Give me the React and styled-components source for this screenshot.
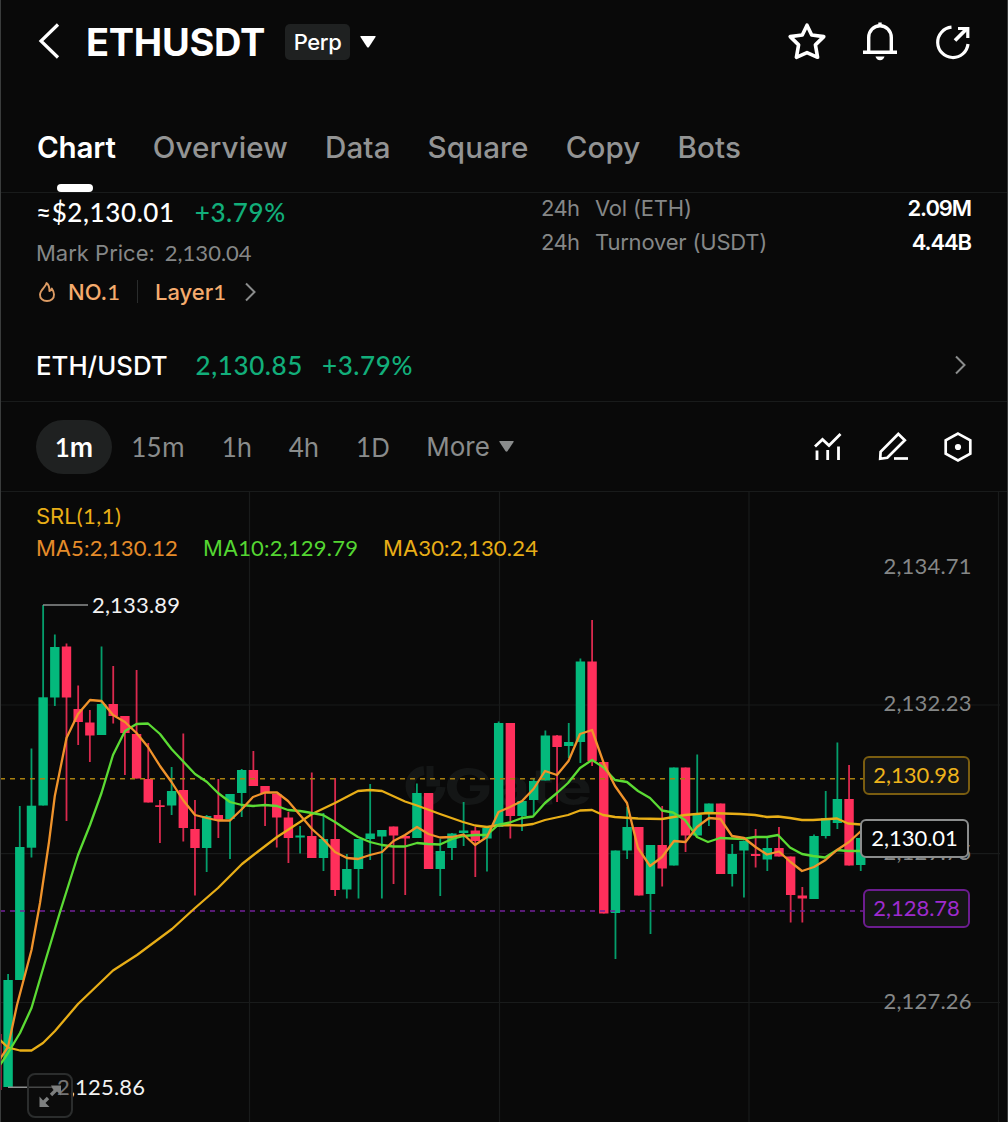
import React from "react";
import styled, { createGlobalStyle } from "styled-components";

const GlobalStyle = createGlobalStyle`
  body {
    margin: 0;
    background-color: #090909;
  }
`;

const Screen = styled.div`
  display: flex;
  flex-direction: column;
  width: 1008px;
  height: 1122px;
  box-sizing: border-box;
  border-left: 1px solid #3a3c3c;
  border-right: 1px solid #3a3c3c;
  background-color: #090909;
  color: #fff;
  font-family: Inter, "Liberation Sans", sans-serif;
  overflow: hidden;
`;

// prices are set in a face with even figure widths
const Num = styled.span`
  font-family: ${({ $medium }) => ($medium ? '"Lato Medium", ' : "")}Lato, Inter, sans-serif;
  font-size: ${({ $size }) => ($size ? `${$size}px` : "inherit")};
  letter-spacing: ${({ $spacing }) => $spacing || 0}px;
  padding-bottom: ${({ $lift }) => $lift || 0}px;
`;

const Header = styled.header`
  display: flex;
  align-items: center;
  height: 84px;
  padding: 0 34px 0 36px;
`;

const Pair = styled.h1`
  margin: 0 20px 0 25px;
  font-size: 38px;
  font-weight: 700;
  letter-spacing: -0.3px;
`;

const Tag = styled.span`
  display: flex;
  align-items: center;
  justify-content: center;
  width: 65px;
  height: 36px;
  margin-right: 10px;
  border-radius: 5px;
  background-color: #1f2121;
  font-size: 22px;
  font-weight: 500;
  letter-spacing: -0.4px;
`;

const HeaderActions = styled.div`
  display: flex;
  align-items: center;
  gap: 33px;
  margin-left: auto;
  margin-top: -2px;
`;

const Tabs = styled.nav`
  display: flex;
  gap: 37px;
  height: 108px;
  padding: 0 36px;
  border-bottom: 1px solid #191b1b;
`;

const Tab = styled.div`
  display: flex;
  flex-direction: column;
  align-items: center;
  justify-content: space-between;
  padding-top: 44px;
  box-sizing: border-box;
  font-size: 29.6px;
  line-height: 38px;
  letter-spacing: ${({ $active }) => ($active ? -0.2 : 0.12)}px;
  font-weight: ${({ $active }) => ($active ? 600 : 500)};
  color: ${({ $active }) => ($active ? "#fff" : "#939494")};
`;

const TabMarker = styled.span`
  width: 36px;
  height: 8px;
  margin-right: 3px;
  border-radius: 4px;
  background-color: #fff;
`;

const Stats = styled.section`
  display: flex;
  justify-content: space-between;
  height: 137px;
  padding: 0 36px 0 35px;
`;

const PriceColumn = styled.div`
  display: flex;
  flex-direction: column;
`;

const PriceLine = styled.div`
  display: flex;
  align-items: center;
  gap: 20px;
  height: 39px;
  font-size: 26px;
  font-weight: 500;
`;

const Up = styled.span`
  display: flex;
  color: #12ae7a;
`;

const MarkPrice = styled.div`
  display: flex;
  align-items: center;
  gap: 10px;
  height: 42px;
  font-size: 22px;
  color: #858787;
`;

const Ranking = styled.div`
  display: flex;
  align-items: center;
  height: 35px;
  font-size: 22px;
  font-weight: 500;
  color: #f5ab6d;
`;

const RankingText = styled.span`
  margin-left: ${({ $left }) => $left}px;
  margin-right: ${({ $right }) => $right}px;
  line-height: 26px;
`;

const RankingDivider = styled.span`
  width: 1px;
  height: 23px;
  background-color: #2a2c2c;
`;

const VolumeColumn = styled.div`
  width: 430px;
  margin-top: -2px;
`;

const VolumeRow = styled.div`
  display: flex;
  align-items: center;
  height: 34px;
  font-size: 22px;
  letter-spacing: -0.2px;
  color: #858787;
`;

const Period = styled.span`
  width: 54px;
  letter-spacing: -0.6px;
`;

const VolumeValue = styled.span`
  margin-left: auto;
  color: #fff;
  font-weight: 600;
  letter-spacing: -1.1px;
`;

const SpotRow = styled.section`
  display: flex;
  align-items: center;
  height: 71px;
  padding: 0 40px 0 35px;
  border-bottom: 1px solid #191b1b;
  font-size: 25.8px;
  font-weight: 500;
`;

const SpotText = styled.span`
  display: flex;
  margin-right: ${({ $gap }) => $gap}px;
  color: ${({ $up }) => ($up ? "#12ae7a" : "#fff")};
`;

const Push = styled.span`
  display: flex;
  margin-left: auto;
  margin-bottom: 2px;
`;

const Toolbar = styled.section`
  display: flex;
  align-items: center;
  height: 89px;
  padding: 0 34px 0 35px;
  border-bottom: 1px solid #191b1b;
`;

const Interval = styled.span`
  display: flex;
  align-items: baseline;
  justify-content: center;
  width: ${({ $width }) => $width}px;
  height: 54px;
  line-height: 54px;
  margin-right: ${({ $gap }) => $gap}px;
  border-radius: 27px;
  background-color: ${({ $active }) => ($active ? "#1f2121" : "transparent")};
  color: ${({ $active }) => ($active ? "#fff" : "#8a8c8c")};
  font-size: 26px;
  font-weight: ${({ $active }) => ($active ? 600 : 400)};
`;

const ToolIcons = styled.div`
  display: flex;
  align-items: center;
  gap: 34px;
  margin-left: auto;
`;

const ChartArea = styled.section`
  position: relative;
  height: 630px;
  margin-left: -1px;
  width: 1007px;
`;

const Indicators = styled.div`
  position: absolute;
  top: 8px;
  left: 36px;
  display: flex;
  flex-direction: column;
  font-size: 22px;
  line-height: 31px;
`;

const IndicatorRow = styled.div`
  display: flex;
  gap: 25px;
`;

const IndicatorText = styled.span`
  color: ${({ $color }) => $color};
`;

const PriceBadge = styled.div`
  position: absolute;
  top: ${({ $top }) => $top}px;
  left: ${({ $left }) => $left}px;
  display: flex;
  align-items: center;
  justify-content: center;
  width: ${({ $width }) => $width}px;
  height: 39px;
  box-sizing: border-box;
  border: 2px solid ${({ $border }) => $border};
  border-radius: 6px;
  background-color: ${({ $bg }) => $bg};
  color: ${({ $color }) => $color};
  font-size: 22px;
`;

const ExpandButton = styled.div`
  position: absolute;
  left: 27px;
  top: 581px;
  width: 46px;
  height: 45px;
  box-sizing: border-box;
  border: 2px solid #2b2d2d;
  border-radius: 8px;
  background-color: rgba(12, 13, 13, 0.55);
`;

const CHART_TOP = 492;
const STEP = 11.68;
const UP = "#04b97c";
const DOWN = "#ff2f5b";

// [direction, high, body top, body bottom, low]
const candles = [
  ["u", 974, 980, 1087, 1087],
  ["u", 806, 847, 980, 980],
  ["u", 748.5, 805.7, 847.7, 857.5],
  ["u", 605, 697.3, 805.5, 805.5],
  ["u", 634.5, 647, 697.5, 706],
  ["d", 643.5, 646.5, 697.5, 821],
  ["d", 685.5, 709, 722, 745],
  ["d", 710, 722.5, 735.5, 762],
  ["u", 646.5, 704, 735, 735],
  ["d", 666, 704, 716, 723.5],
  ["d", 716, 716, 733, 775],
  ["d", 670, 734, 778.5, 778.5],
  ["d", 743, 779, 802.5, 802.5],
  ["d", 800, 805.3, 807, 843],
  ["u", 767, 791, 805.5, 815],
  ["d", 733.5, 790, 828, 841.5],
  ["d", 800, 829, 848, 895.5],
  ["u", 815, 816, 848, 872],
  ["d", 779, 815, 820, 838],
  ["u", 794, 794, 819, 859],
  ["u", 769, 770, 793, 817],
  ["d", 751, 770, 786, 786],
  ["d", 786, 786, 793, 826],
  ["d", 794, 794, 817.5, 847.5],
  ["d", 812, 817.5, 838, 863],
  ["u", 826, 835.5, 837.5, 853.5],
  ["d", 772.5, 836, 858, 858],
  ["u", 813, 839, 858, 871],
  ["d", 778, 839, 890, 896],
  ["u", 854, 869, 889.5, 898.5],
  ["u", 839, 839, 869, 898.5],
  ["u", 784, 833.5, 839, 860],
  ["u", 830, 830, 836.5, 898.5],
  ["d", 826.5, 826.5, 835.5, 884],
  ["d", 835, 836, 838.5, 895],
  ["u", 783.5, 793, 838, 838],
  ["d", 793, 793, 869, 869],
  ["u", 839, 851, 869, 896],
  ["u", 833, 833.5, 848, 860],
  ["u", 802, 830.5, 833, 846],
  ["d", 827, 830.5, 841, 877],
  ["u", 828, 828, 838.5, 871.5],
  ["u", 721.5, 723, 827, 827],
  ["d", 723, 723, 816, 838.5],
  ["u", 801, 801, 816, 831],
  ["u", 779, 781, 800, 815],
  ["u", 730.5, 735.5, 780.5, 780.5],
  ["d", 735, 735.5, 747, 802],
  ["u", 723, 742, 746, 758],
  ["u", 658.5, 661.5, 742, 763],
  ["d", 620, 661.5, 761, 766],
  ["d", 762, 762, 913.5, 913.5],
  ["u", 850.5, 850.5, 913, 959],
  ["u", 807, 827, 850.5, 859],
  ["d", 827, 827, 895.5, 895.5],
  ["u", 845, 845, 894, 934],
  ["d", 806, 845, 868.5, 886.5],
  ["u", 767.5, 767.5, 865.5, 865.5],
  ["d", 767.5, 767.5, 835.5, 852],
  ["u", 754.5, 815, 835.5, 835.5],
  ["u", 803.5, 803.5, 813, 826],
  ["d", 803.5, 803.5, 874, 874],
  ["u", 844, 854, 874, 886.5],
  ["u", 840.5, 841, 850.5, 897.5],
  ["d", 829, 854, 856, 867.5],
  ["u", 838, 848, 859.5, 871],
  ["d", 827, 848, 856.5, 856.5],
  ["d", 856.5, 856.5, 895, 922.5],
  ["d", 887, 895.5, 898.5, 922.5],
  ["u", 834.5, 836, 899, 899],
  ["u", 791, 818, 836, 838.5],
  ["u", 742.5, 799, 823, 829],
  ["d", 765, 799, 865.5, 865.5],
  ["u", 837, 838, 865, 871],
];

const ma5 =
  "0,1059 8,1047 17,1005 31.5,950 40,903 49,842 54.8,796 66.5,738 78,714 90,700 101.5,701 113,715 125,722 136.5,733 148,747 160,766 171.5,782 183,800 195,815 207,818 218,820.5 230,820.5 242,809 253,797 265,792.5 277,792.5 288,801 300,815 312,829 323,839 335,852 347,858 358,859 370,855 382,852 393.5,841 405,835 417,827 428.5,834 440,837.5 452,837 463.5,834.5 475,845 487,837 498.5,812 510,807 522,801 533.5,789 545,771 557,775 568.5,761 580,734 592,730 604,764 615,786 627,803 632,824 638,848 650,866 662,857 674,841 685.5,842 697,827 709,818 720.5,819 732,836 744,838 755.5,847 767,854.5 779,851.5 790.5,862 802,871 814,867 825.5,860 837,850 849,842 861,831";
const ma10 =
  "0,1065 8,1053 20,1033 31.5,1008 45,962 60,912 78,855 90,825 101.5,793 113,755 125,731 136.5,724 148,723.5 160,734 171.5,749 195,774 207,782 218,793 230,802 242,805 253,806 265,805 277,806 288,810 300,811 312,813 323,815 335,822 347,830 358,837 370,842 382,845 393,846.5 405,846.5 417,843 428,844 440,844.5 452,839 463.5,836 475,835 487,835 498,825 510,822.5 522,818 533,816.5 545,803 557,793 568,783 580,768 592,760 603,767 615,780 627,782 638,791 650,798 662,810.5 673,812.5 685,820 697,837 708,842 720,838 732,838.5 743,839 755,837 767,837 778,835 790,847.5 802,854 813,856 825,857.5 837,850 848,851 861,851";
const ma30 =
  "0,1040 8,1047.5 20,1050.5 31.5,1050.5 43,1043 55,1031 78,1004 113,970.5 137,955 172,929 195,908 218,888 242,864 258,851.5 277,837 300,822 312,814 335,803 358,791 370,790 382,791 405,801.5 417,805.5 440,814 463,822 475,825.5 487,827 500,825 522,825.5 533,824 545,820 568,815 580,810.5 592,810 603,815 615,817 638,818.5 662,819 685,815 708,813 740,814 755,815 767,817 778,816.5 790,818 802,820 813,820 837,818.5 848,823.5 861,824.5";

const BackIcon = () => (
  <svg width="24" height="40" viewBox="0 0 24 40" fill="none" stroke="#fff" strokeWidth="3.2">
    <path d="M21 2.5 L4 19 L21 35.5" />
  </svg>
);

const Caret = ({ size = 16, color = "#fff" }) => (
  <svg width={size} height={size * 0.75} viewBox="0 0 16 12" fill={color}>
    <path d="M0.8 0 H15.2 Q16 0 15.5 1 L9 11 Q8 12 7 11 L0.5 1 Q0 0 0.8 0 Z" />
  </svg>
);

const Chevron = ({ color }) => (
  <svg width="13" height="20" viewBox="0 0 13 20" fill="none" stroke={color} strokeWidth="2">
    <path d="M2 1.5 L10.5 10 L2 18.5" />
  </svg>
);

const StarIcon = () => (
  <svg width="40" height="40" viewBox="0 0 40 40" fill="none" stroke="#fff" strokeWidth="3.6" strokeLinejoin="round">
    <path d="M20 4.2 L24.7 14 L36.8 15.6 L28.4 23.9 L30.6 36.3 L20 31.6 L9.4 36.3 L11.6 23.9 L3.2 15.6 L15.3 14 Z" />
  </svg>
);

const BellIcon = () => (
  <svg width="40" height="40" viewBox="0 0 40 40" fill="none" stroke="#fff" strokeWidth="3.4">
    <path d="M8.7 31 V16.5 A11.3 11.8 0 0 1 31.3 16.5 V31" />
    <path d="M3 31.2 H37" />
    <path d="M20 1.5 V6" />
    <path d="M15.5 35.5 H24.5 Q23.5 39.2 20 39.2 Q16.5 39.2 15.5 35.5 Z" fill="#fff" stroke="none" />
  </svg>
);

const ShareIcon = () => (
  <svg width="40" height="40" viewBox="0 0 40 40" fill="none" stroke="#fff" strokeWidth="3.2">
    <path d="M18.5 6.2 A15.2 15.2 0 1 0 35 23" />
    <path d="M22 19.5 L34 7.5" strokeWidth="3.8" />
    <path d="M25 7.5 H34.8 V17" />
  </svg>
);

const FlameIcon = () => (
  <svg width="20" height="24" viewBox="0 0 20 24" fill="none" stroke="#dc9b64" strokeWidth="1.9" strokeLinejoin="round">
    <path d="M10.5 3 C10.5 6.5 4.5 9 4 14.5 C3.8 18.5 7 21 11 21 C15 21 18.2 18.5 18 14.5 C17.9 12 16.8 10 15.8 8.5 C15.4 10 14.6 10.8 13.4 11 C13.6 7.5 12.8 4.8 10.5 3 Z" />
  </svg>
);

const TrendIcon = () => (
  <svg width="30" height="32" viewBox="0 0 30 32" fill="none" stroke="#fff" strokeWidth="2.8">
    <path d="M2 15.5 L9.5 8.5 L16 14.5 L27.5 3" />
    <path d="M4 19.5 V29 M14.7 19 V29 M25.5 15.5 V29" />
  </svg>
);

const PencilIcon = () => (
  <svg width="32" height="32" viewBox="0 0 32 32" fill="none" stroke="#fff" strokeWidth="2.7">
    <path d="M3.2 27.8 L3.6 20.8 L21.3 3 L27.8 9.2 L10.3 26.8 Z" />
    <path d="M17 27.5 H31" />
  </svg>
);

const HexIcon = () => (
  <svg width="30" height="32" viewBox="0 0 30 32" fill="none" stroke="#fff" strokeWidth="2.7">
    <path d="M15 2.6 L27.3 9.2 V22.8 L15 29.4 L2.7 22.8 V9.2 Z" />
    <circle cx="15" cy="16" r="3.1" fill="#fff" stroke="none" />
  </svg>
);

const ExpandIcon = () => (
  <svg width="42" height="41" viewBox="0 0 42 41" fill="none" stroke="#7d7f7f" strokeWidth="3.4">
    <path d="M22 20 L28 14" />
    <path d="M22 10.5 H32 V20.5 L28 16.5 L24 14.5 Z" fill="#7d7f7f" stroke="none" />
    <path d="M19 23 L13 29" />
    <path d="M10.5 21.5 V32 H20.5 L16.5 28 L14.5 26 Z" fill="#7d7f7f" stroke="none" />
  </svg>
);

const axisLabels = [
  { y: 565.5, text: "2,134.71" },
  { y: 702.5, text: "2,132.23" },
  { y: 851.5, text: "2,129.75" },
  { y: 1001, text: "2,127.26" },
];

const Chart = () => (
  <svg
    width="1007"
    height="630"
    viewBox={`0 ${CHART_TOP} 1007 630`}
    fontFamily="Lato, Inter, sans-serif"
    fontSize="22"
  >
    <g stroke="#191b1b" strokeWidth="1.2">
      {[249.5, 499.5, 749, 998.5].map((x) => (
        <line key={x} x1={x} x2={x} y1={CHART_TOP} y2="1122" />
      ))}
      {[705, 853.7, 1002.5].map((y) => (
        <line key={y} x1="0" x2="1000" y1={y} y2={y} />
      ))}
    </g>

    <g fill="none" stroke="#141616" strokeWidth="9">
      <path d="M424 770.5 A15.5 15.5 0 1 0 441 787" />
      <path d="M430 766 V783 H440" strokeWidth="7" />
    </g>
    <text
      x="444"
      y="804.5"
      fontFamily="Inter, sans-serif"
      fontSize="51"
      fontWeight="700"
      fill="#141616"
      textLength="148"
      lengthAdjust="spacingAndGlyphs"
    >
      Gate
    </text>

    <g fill="#858787">
      {axisLabels.map(({ y, text }) => (
        <text key={text} x="883.5" y={y + 8} textLength="88">
          {text}
        </text>
      ))}
    </g>

    <rect x="0" y="1034" width="1.5" height="56" fill={DOWN} />
    {candles.map(([dir, high, top, bottom, low], i) => {
      const x = 8.1 + i * STEP;
      const color = dir === "u" ? UP : DOWN;
      return (
        <g key={i} fill={color}>
          <rect x={x - 0.9} y={high} width="1.8" height={low - high} opacity="0.85" />
          <rect x={x - 4.7} y={top} width="9.4" height={bottom - top} />
        </g>
      );
    })}

    <g fill="none" strokeWidth="1.5" strokeDasharray="5 5">
      <line x1="0" x2="863" y1="778.7" y2="778.7" stroke="#a9810f" />
      <line x1="0" x2="863" y1="911" y2="911" stroke="#74219a" />
    </g>

    <g fill="none" strokeWidth="2.3" strokeLinejoin="round">
      <polyline points={ma30} stroke="#e8ae17" />
      <polyline points={ma10} stroke="#5bdb34" />
      <polyline points={ma5} stroke="#f0932b" />
    </g>

    <g stroke="#8d8f8f" strokeWidth="1.6">
      <line x1="43" x2="88" y1="605" y2="605" />
      <line x1="8" x2="56" y1="1087.3" y2="1087.3" />
    </g>
    <g fill="#f2f2f2">
      <text x="92" y="613" textLength="88">
        2,133.89
      </text>
      <text x="57" y="1095" textLength="88">
        2,125.86
      </text>
    </g>
  </svg>
);

const App = () => {
  return (
    <Screen>
      <GlobalStyle />
      <Header>
        <BackIcon />
        <Pair>ETHUSDT</Pair>
        <Tag>Perp</Tag>
        <Caret />
        <HeaderActions>
          <StarIcon />
          <BellIcon />
          <ShareIcon />
        </HeaderActions>
      </Header>

      <Tabs>
        <Tab $active>
          Chart
          <TabMarker />
        </Tab>
        <Tab>Overview</Tab>
        <Tab>Data</Tab>
        <Tab>Square</Tab>
        <Tab>Copy</Tab>
        <Tab>Bots</Tab>
      </Tabs>

      <Stats>
        <PriceColumn>
          <PriceLine>
            <Num $medium $spacing={0.6} $lift={2}>≈$2,130.01</Num>
            <Up>
              <Num $medium $spacing={0.6} $lift={2}>+3.79%</Num>
            </Up>
          </PriceLine>
          <MarkPrice>
            <span>Mark Price:</span>
            <Num $lift={2}>2,130.04</Num>
          </MarkPrice>
          <Ranking>
            <FlameIcon />
            <RankingText $left={12} $right={18}>
              NO.<Num $medium $spacing={-1}>1</Num>
            </RankingText>
            <RankingDivider />
            <RankingText $left={17} $right={18}>
              Layer<Num $medium>1</Num>
            </RankingText>
            <Chevron color="#8a8c8c" />
          </Ranking>
        </PriceColumn>
        <VolumeColumn>
          <VolumeRow>
            <Period>24h</Period>
            <span>Vol (ETH)</span>
            <VolumeValue>2.09M</VolumeValue>
          </VolumeRow>
          <VolumeRow>
            <Period>24h</Period>
            <span>Turnover (USDT)</span>
            <VolumeValue>4.44B</VolumeValue>
          </VolumeRow>
        </VolumeColumn>
      </Stats>

      <SpotRow>
        <SpotText $gap={28}>ETH/USDT</SpotText>
        <SpotText $up $gap={19}>
          <Num $medium $size={26} $spacing={0.6} $lift={2}>2,130.85</Num>
        </SpotText>
        <SpotText $up $gap={0}>
          <Num $medium $size={26} $spacing={0.6} $lift={2}>+3.79%</Num>
        </SpotText>
        <Push>
          <Chevron color="#8a8c8c" />
        </Push>
      </SpotRow>

      <Toolbar>
        <Interval $active $width={76} $gap={19}>
          <Num>1</Num>m
        </Interval>
        <Interval $width={54} $gap={37}>
          <Num $spacing={0.4}>15</Num>m
        </Interval>
        <Interval $width={30} $gap={36}>
          <Num>1</Num>h
        </Interval>
        <Interval $width={32} $gap={36}>
          <Num>4</Num>h
        </Interval>
        <Interval $width={34} $gap={37}>
          <Num>1</Num>D
        </Interval>
        <Interval $width={62} $gap={10}>More</Interval>
        <Caret size={15} color="#8a8c8c" />
        <ToolIcons>
          <TrendIcon />
          <PencilIcon />
          <HexIcon />
        </ToolIcons>
      </Toolbar>

      <ChartArea>
        <Chart />
        <Indicators>
          <IndicatorText $color="#e8ae17">
            SRL<Num $spacing={0.5}>(1,1)</Num>
          </IndicatorText>
          <IndicatorRow>
            <IndicatorText $color="#e58c2a">
              MA<Num $spacing={0.2}>5:2,130.12</Num>
            </IndicatorText>
            <IndicatorText $color="#54d632">
              MA<Num $spacing={0.2}>10:2,129.79</Num>
            </IndicatorText>
            <IndicatorText $color="#e8ae17">
              MA<Num $spacing={0.2}>30:2,130.24</Num>
            </IndicatorText>
          </IndicatorRow>
        </Indicators>
        <PriceBadge $top={264} $left={863} $width={107} $border="#7a5d10" $bg="#141514" $color="#edb31b">
          <Num $lift={2}>2,130.98</Num>
        </PriceBadge>
        <PriceBadge $top={397} $left={863} $width={107} $border="#6c1d8f" $bg="#141514" $color="#9f2bcf">
          <Num $lift={2}>2,128.78</Num>
        </PriceBadge>
        <PriceBadge $top={327} $left={860} $width={109} $border="#8b8d8d" $bg="#070707" $color="#fff">
          <Num $lift={2}>2,130.01</Num>
        </PriceBadge>
        <ExpandButton>
          <ExpandIcon />
        </ExpandButton>
      </ChartArea>
    </Screen>
  );
};

export default App;
